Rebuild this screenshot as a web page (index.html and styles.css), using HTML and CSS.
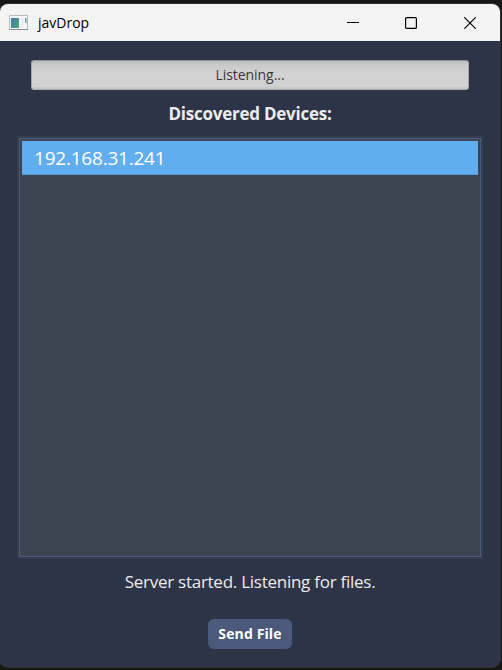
FILE: index.html
```html
<!DOCTYPE html>
<html lang="en">
<head>
<meta charset="utf-8">
<title>javDrop</title>
<link rel="stylesheet" href="styles.css">
</head>
<body>
<main class="window">
  <header class="titlebar">
    <svg class="app-icon" width="20" height="16" viewBox="0 0 20 16">
      <defs><linearGradient id="pane" x1="0" y1="0" x2="1" y2="1"><stop stop-color="#4675a5"/><stop offset="1" stop-color="#4fa77c"/></linearGradient></defs>
      <path d="M.5.5h18v14H.5z" fill="#f7f8f9" stroke="#b5bbc4"/>
      <path d="M0 14.5h19" stroke="#858e9d"/>
      <path d="M2 3h8v10H2z" fill="url(#pane)"/>
      <path d="M11 3h4v10h-4z" fill="#e9eef3"/>
      <path d="M16 3h1.5v6L16 7z" fill="#5aa394"/>
    </svg>
    <span class="title"><span>javDrop</span></span>
    <div class="controls">
      <svg width="12" height="12" viewBox="0 0 12 12"><path d="M0 5.5h12" stroke="#000"/></svg>
      <svg width="12" height="12" viewBox="0 0 12 12"><rect x=".6" y=".6" width="10.8" height="10.8" rx="1" fill="none" stroke="#000" stroke-width="1.2"/></svg>
      <svg class="close" width="12" height="12" viewBox="0 0 12 12"><path d="M.3.3l11.4 11.4M11.7.3L.3 11.7" stroke="#000" stroke-width="1.15"/></svg>
    </div>
  </header>
  <section class="content">
    <div class="status-bar"><span>Listening...</span></div>
    <h1 class="heading"><span>Discovered Devices:</span></h1>
    <ul class="devices"><li><span>192.168.31.241</span></li></ul>
    <p class="message"><span>Server started. Listening for files.</span></p>
    <button class="send"><span>Send File</span></button>
  </section>
</main>
</body>
</html>
```
FILE: styles.css
```css
* { box-sizing: border-box; }
body {
  margin: 0;
  height: 670px;
  padding: 4px 2px 3px 0;
  overflow: hidden;
  background: #171716;
  font-family: "Open Sans", "Noto Sans", sans-serif;
}
.window {
  height: 663px;
  overflow: hidden;
  border-radius: 8px;
  background: #2e3447;
  box-shadow: 0 0 0 1px #30302f;
}
.titlebar {
  display: flex;
  align-items: center;
  height: 37px;
  padding: 0 24px 0 9px;
  background: #f3f3f3;
}
.title {
  margin-left: 9px;
  color: #000;
  font-size: 14px;
  line-height: 20px;
  letter-spacing: 0;
}
.controls {
  display: flex;
  gap: 46px;
  margin-left: auto;
}
.controls .close { margin-left: 1px; }
.controls svg, .app-icon { display: block; }
.content {
  display: flex;
  flex-direction: column;
  align-items: center;
  padding: 19px 19px 0;
}
.status-bar {
  width: 438px;
  height: 30px;
  border: 1px solid #a5a6a8;
  border-color: #929292 #a5a6a8 #a9afb3;
  border-radius: 3px;
  background: linear-gradient(#bcbcbc, #cacaca 4px, #d2d2d2 12px, #d2d2d2 26px, #bdbfc0 27px, #c7cacb);
  color: #383838;
  font-size: 14px;
  line-height: 28px;
  letter-spacing: -0.05px;
  text-align: center;
}
.heading {
  margin: 11px 0 0;
  color: #ececec;
  font-size: 17px;
  font-weight: 700;
  line-height: 25px;
  letter-spacing: -0.25px;
}
.devices {
  width: 462px;
  height: 419px;
  margin: 12px 0 0;
  padding: 2px;
  border: 1px solid #4b5a7d;
  outline: 2px solid #353e51;
  background: #3d4452;
  list-style: none;
}
.devices li {
  height: 34px;
  padding-left: 12px;
  border-bottom: 1px solid #559bd8;
  background: #61aeef;
  color: #fff;
  font-size: 19px;
  line-height: 34px;
  letter-spacing: -0.22px;
}
.message {
  margin: 12px 0 0;
  color: #ececec;
  font-size: 17px;
  line-height: 25px;
  letter-spacing: -0.26px;
}
.send {
  width: 84px;
  height: 30px;
  margin: 25px 0 0;
  padding: 0;
  border: 0;
  border-radius: 6px;
  background: #4b5a7b;
  color: #fff;
  font: 700 14px/30px "Open Sans", "Noto Sans", sans-serif;
  letter-spacing: 0.12px;
}
```
